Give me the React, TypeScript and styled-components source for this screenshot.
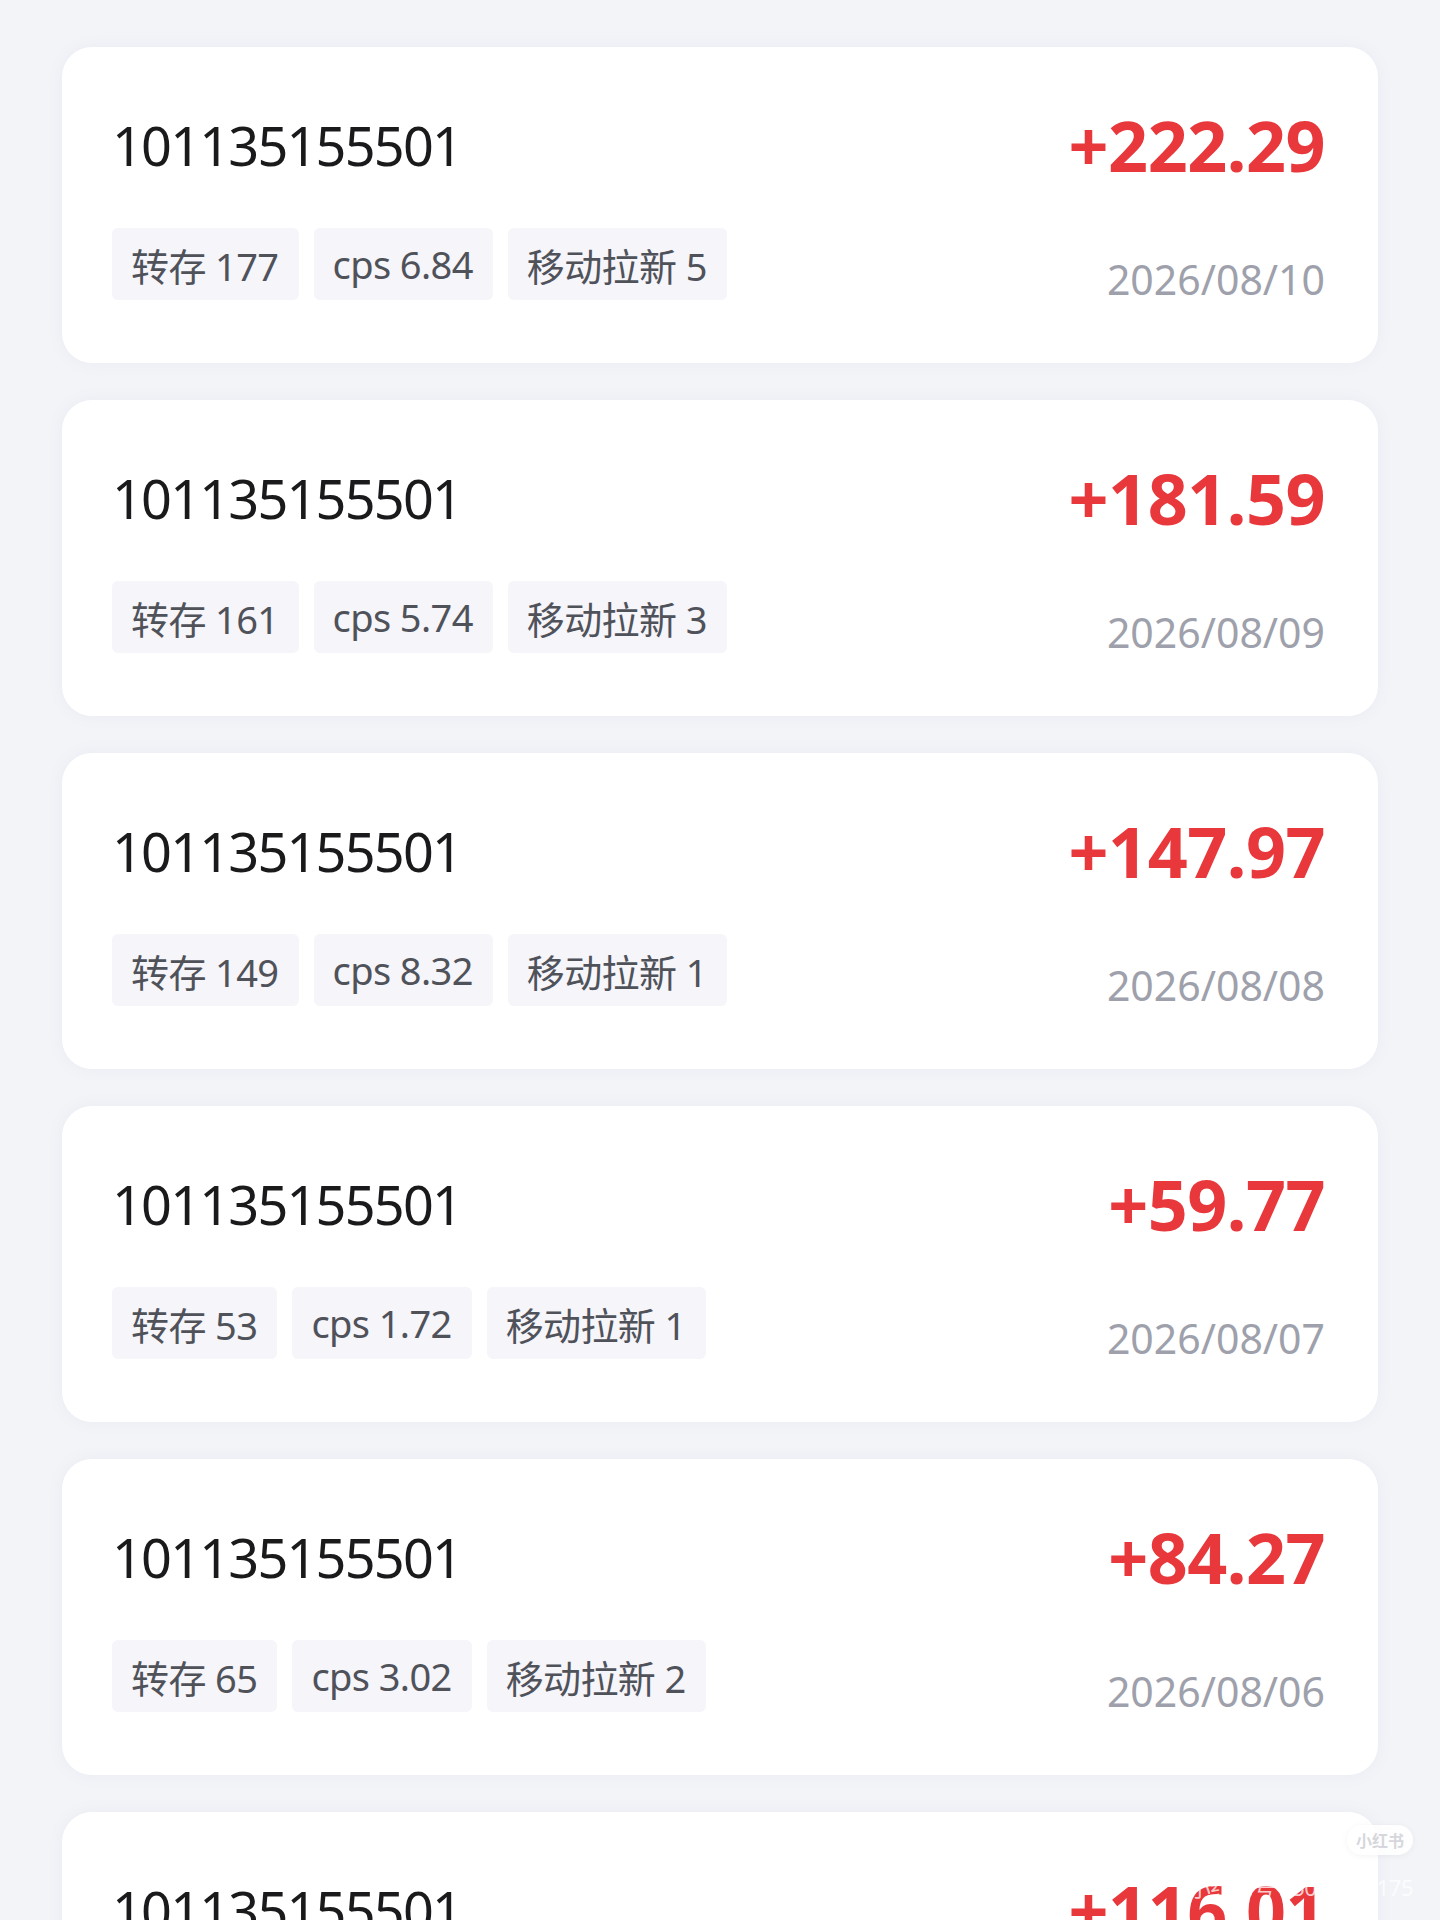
import React from "react";
import styled, { createGlobalStyle } from "styled-components";

const RECORDS = [
  { id: 1, account: "101135155501", amount: "+222.29", saved: 177, cps: "6.84", pull: 5, date: "2026/08/10" },
  { id: 2, account: "101135155501", amount: "+181.59", saved: 161, cps: "5.74", pull: 3, date: "2026/08/09" },
  { id: 3, account: "101135155501", amount: "+147.97", saved: 149, cps: "8.32", pull: 1, date: "2026/08/08" },
  { id: 4, account: "101135155501", amount: "+59.77", saved: 53, cps: "1.72", pull: 1, date: "2026/08/07" },
  { id: 5, account: "101135155501", amount: "+84.27", saved: 65, cps: "3.02", pull: 2, date: "2026/08/06" },
  { id: 6, account: "101135155501", amount: "+116.01", saved: 92, cps: "4.16", pull: 2, date: "2026/08/05" },
];

const GlobalStyle = createGlobalStyle`
  html, body {
    margin: 0;
    padding: 0;
    background: #f3f4f8;
  }
  body {
    font-family: "Noto Sans", "Noto Sans CJK SC", sans-serif;
  }
`;

const Page = styled.div`
  position: relative;
  height: 1920px;
  overflow: hidden;
  box-sizing: border-box;
  padding: 47px 62px 0;
  display: flex;
  flex-direction: column;
  gap: 37px;
  background: #f3f4f8;
`;

const Card = styled.div`
  flex: none;
  height: 316px;
  box-sizing: border-box;
  padding: 63px 53px 0 50px;
  background: #ffffff;
  border-radius: 30px;
  box-shadow: 0 0 16px rgba(120, 125, 150, 0.07);
`;

const TopRow = styled.div`
  height: 70px;
  display: flex;
  align-items: center;
  justify-content: space-between;
`;

const Account = styled.div`
  font-family: "Noto Sans", sans-serif;
  font-size: 54px;
  line-height: 70px;
  letter-spacing: -1.8px;
  color: #1a1a1c;
`;

const Amount = styled.div`
  font-family: "Noto Sans", sans-serif;
  font-weight: 700;
  font-size: 70px;
  line-height: 70px;
  letter-spacing: -0.5px;
  color: #e8383c;
`;

const BottomRow = styled.div`
  margin-top: 48px;
  display: flex;
  align-items: flex-end;
  justify-content: space-between;
`;

const Tags = styled.div`
  display: flex;
  gap: 15px;
`;

const Tag = styled.span`
  height: 72px;
  display: inline-flex;
  align-items: center;
  padding: 0 20px 0 19px;
  border-radius: 6px;
  background: #f5f5fa;
  font-family: "Noto Sans", "Noto Sans CJK SC", sans-serif;
  font-size: 38px;
  letter-spacing: -0.6px;
  color: #50525a;
  white-space: nowrap;
`;

const DateText = styled.div`
  font-family: "Noto Sans", sans-serif;
  font-size: 41px;
  line-height: 41px;
  color: #9ea1ab;
`;

const Badge = styled.div`
  position: absolute;
  left: 1347px;
  top: 1825px;
  width: 66px;
  height: 30px;
  border-radius: 15px;
  background: rgba(255, 255, 255, 0.85);
  box-shadow: 0 1px 6px rgba(0, 0, 0, 0.05);
  display: flex;
  align-items: center;
  justify-content: center;
  font-family: "Noto Sans CJK SC", sans-serif;
  font-size: 16px;
  font-weight: 700;
  color: #d6d7dc;
`;

const Watermark = styled.div`
  position: absolute;
  right: 27px;
  top: 1870px;
  font-family: "Noto Sans", "Noto Sans CJK SC", sans-serif;
  font-size: 22px;
  letter-spacing: -0.5px;
  color: rgba(255, 255, 255, 0.75);
`;

export default function App() {
  return (
    <>
      <GlobalStyle />
      <Page>
        {RECORDS.map(item => (
          <Card key={item.id}>
            <TopRow>
              <Account>{item.account}</Account>
              <Amount>{item.amount}</Amount>
            </TopRow>
            <BottomRow>
              <Tags>
                <Tag>转存 {item.saved}</Tag>
                <Tag>cps {item.cps}</Tag>
                <Tag>移动拉新 {item.pull}</Tag>
              </Tags>
              <DateText>{item.date}</DateText>
            </BottomRow>
          </Card>
        ))}
        <Badge>小红书</Badge>
        <Watermark>小红书号 95093635175</Watermark>
      </Page>
    </>
  );
}
